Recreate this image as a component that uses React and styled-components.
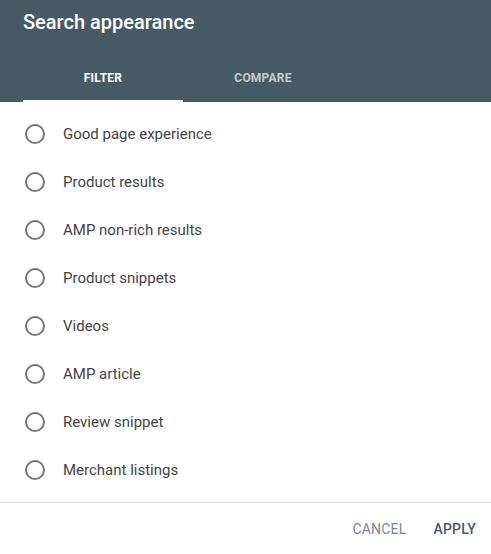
import React from 'react';
import styled, { createGlobalStyle } from 'styled-components';

const Global = createGlobalStyle`
  body { margin: 0; font-family: Roboto, "Liberation Sans", sans-serif; background: #fff; }
`;

const Dialog = styled.div`
  width: 491px;
  height: 554px;
  display: flex;
  flex-direction: column;
  background: #fff;
`;

const Header = styled.div`
  background: #455a64;
  padding: 0 0 0 23px;
  height: 102px;
  display: flex;
  flex-direction: column;
  box-sizing: border-box;
`;

const Title = styled.h2`
  margin: 0;
  padding-top: 9px;
  height: 54px;
  box-sizing: border-box;
  color: #fff;
  font-size: 20px;
  font-weight: 500;
  line-height: 26px;
`;

const Tabs = styled.div`
  display: flex;
  height: 48px;
`;

const Tab = styled.div`
  width: 160px;
  display: flex;
  align-items: center;
  justify-content: center;
  font-size: 12px;
  font-weight: 700;
  letter-spacing: 0.2px;
  color: ${p => (p.active ? '#fff' : 'rgba(255,255,255,0.7)')};
  box-sizing: border-box;
  padding-top: 1px;
  border-bottom: 2px solid ${p => (p.active ? '#fff' : 'transparent')};
`;

const List = styled.div`
  padding-top: 7px;
  flex: 1;
`;

const Row = styled.label`
  display: flex;
  align-items: center;
  height: 48px;
  padding-left: 25px;
  padding-top: 1px;
  box-sizing: border-box;
  gap: 18px;
  font-size: 15px;
  color: #444;
  cursor: pointer;
`;

const Radio = styled.span`
  width: 20px;
  height: 20px;
  box-sizing: border-box;
  border: 2px solid #757575;
  border-radius: 50%;
`;

const Footer = styled.div`
  border-top: 1px solid #e0e0e0;
  height: 51px;
  display: flex;
  justify-content: flex-end;
  align-items: center;
  padding-right: 15px;
  gap: 27px;
`;

const Button = styled.button`
  background: none;
  border: 0;
  padding: 0;
  font-family: inherit;
  font-size: 14px;
  letter-spacing: 0.2px;
  font-weight: ${p => (p.primary ? 500 : 400)};
  color: ${p => (p.primary ? '#455a64' : '#80868b')};
  cursor: pointer;
`;

const items = [
  'Good page experience',
  'Product results',
  'AMP non-rich results',
  'Product snippets',
  'Videos',
  'AMP article',
  'Review snippet',
  'Merchant listings',
];

const App = () => (
  <Dialog>
    <Global />
    <Header>
      <Title>Search appearance</Title>
      <Tabs>
        <Tab active>FILTER</Tab>
        <Tab>COMPARE</Tab>
      </Tabs>
    </Header>
    <List>
      {items.map(item => (
        <Row key={item}>
          <Radio />
          {item}
        </Row>
      ))}
    </List>
    <Footer>
      <Button>CANCEL</Button>
      <Button primary>APPLY</Button>
    </Footer>
  </Dialog>
);

export default App;
